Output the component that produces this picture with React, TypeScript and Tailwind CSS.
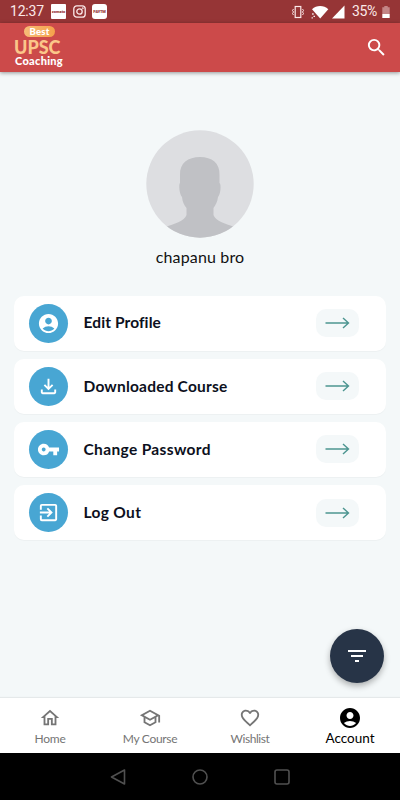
import {
  MdAccountCircle,
  MdExitToApp,
  MdFavoriteBorder,
  MdFilterList,
  MdOutlineFileDownload,
  MdOutlineHome,
  MdOutlineSchool,
  MdSearch,
  MdVpnKey,
} from "react-icons/md";
import type { IconType } from "react-icons";

type MenuRowProps = {
  title: string;
  icon: IconType;
  spacing: string;
};

type TabProps = {
  title: string;
  icon: IconType;
  active?: boolean;
  spacing: string;
};

const menu: MenuRowProps[] = [
  { title: "Edit Profile", icon: MdAccountCircle, spacing: "tracking-[0.1px]" },
  {
    title: "Downloaded Course",
    icon: MdOutlineFileDownload,
    spacing: "tracking-[0.2px]",
  },
  { title: "Change Password", icon: MdVpnKey, spacing: "tracking-[0.35px]" },
  { title: "Log Out", icon: MdExitToApp, spacing: "tracking-[0.35px]" },
];

const tabs: TabProps[] = [
  { title: "Home", icon: MdOutlineHome, spacing: "tracking-[-0.2px]" },
  { title: "My Course", icon: MdOutlineSchool, spacing: "tracking-[-0.3px]" },
  { title: "Wishlist", icon: MdFavoriteBorder, spacing: "tracking-[-0.45px]" },
  {
    title: "Account",
    icon: MdAccountCircle,
    active: true,
    spacing: "tracking-[0px]",
  },
];

const StatusBar = () => (
  <div className="flex h-[23px] shrink-0 items-center bg-[#963536] pl-[10px] pr-[10px] text-[#fbe9e9]">
    <span className="w-[41px] font-['Roboto'] text-[14px] leading-[23px] tracking-[-0.2px]">
      12:37
    </span>
    <span className="flex h-[15px] w-[15px] items-center justify-center overflow-hidden rounded-[1px] bg-white font-['Roboto'] text-[4px] font-black leading-none text-[#963536]">
      zomato
    </span>
    <svg className="ml-[7px]" width="13" height="13" viewBox="0 0 13 13" fill="none" stroke="currentColor" strokeWidth="1.3">
      <rect x="0.8" y="0.8" width="11.4" height="11.4" rx="3" />
      <circle cx="6.5" cy="6.5" r="2.7" />
      <circle cx="9.8" cy="3.2" r="0.3" />
    </svg>
    <span className="ml-[6px] flex h-[15px] w-[15px] items-center justify-center overflow-hidden rounded-[3px] bg-white font-['Roboto'] text-[4px] font-black leading-none tracking-[-0.2px] text-[#963536]">
      PAYTM
    </span>
    <div className="ml-auto flex items-center">
      <svg width="14" height="14" viewBox="0 0 14 14" fill="none" stroke="currentColor">
        <rect x="4.2" y="1.5" width="5.6" height="11" strokeWidth="1.2" />
        <path d="M2.5 4l-1 1.5 1 1.5-1 1.5 1 1.5M11.5 4l1 1.5-1 1.5 1 1.5-1 1.5" strokeWidth="1" />
      </svg>
      <svg className="ml-[6px]" width="18" height="14" viewBox="0 0 18 14" fill="#fff">
        <path d="M1 4.2C5.5 0 12.8 0 17.3 4.2L9.2 13.4z" />
        <path d="M1.2 8.3h1.4v1.4H1.2zM2.5 10.7h1.4v1.4H2.5zM.6 12.2h1.2v1.2H.6z" />
      </svg>
      <svg className="ml-[3px]" width="13" height="14" viewBox="0 0 13 14" fill="#fff">
        <path d="M12.5.5v13H0z" />
      </svg>
      <span className="ml-[7px] w-[26px] whitespace-nowrap font-['Roboto'] text-[14px] leading-[23px] tracking-[-0.4px]">
        35%
      </span>
      <svg className="ml-[4px]" width="8" height="14" viewBox="0 0 8 14">
        <path d="M2.3 1h3.4v1.2h2V9H.3V2.2h2z" fill="#c48586" />
        <path d="M.3 9h7.4v4H.3z" fill="#fff" />
      </svg>
    </div>
  </div>
);

const Header = () => (
  <header className="z-10 flex h-[49px] shrink-0 items-start justify-between bg-[#cc4a4a] pl-[14px] pr-[14px] shadow-[0_1px_4px_rgba(0,0,0,0.4)]">
    <div className="flex flex-col font-['Lato'] font-bold">
      <span className="ml-[10px] mt-[3px] flex h-[11px] w-[31px] items-center justify-center rounded-full bg-gradient-to-r from-[#f6bd77] to-[#f5a14b] text-[9.5px] font-black leading-none tracking-[0.2px] text-white">
        Best
      </span>
      <span className="mt-[2px] h-[16px] whitespace-nowrap text-[18px] font-black leading-[17px] text-[#fbc689]">
        UPSC
      </span>
      <span className="ml-[1px] h-[11px] whitespace-nowrap text-[11px] font-black leading-[11px] tracking-[0.3px] text-white">
        Coaching
      </span>
    </div>
    <MdSearch className="mr-[-2px] mt-[13px] text-white" size={23} />
  </header>
);

const Avatar = () => (
  <svg width="108" height="108" viewBox="0 0 108 108">
    <defs>
      <clipPath id="avatar">
        <circle cx="54" cy="54" r="53.7" />
      </clipPath>
    </defs>
    <g clipPath="url(#avatar)">
      <rect width="108" height="108" fill="#dddee1" />
      <path
        d="M34 45C33.500 33 42 27 54 27S74 33 73.500 45V53C75.500 54 74.500 65 72 67C71.500 72 69.500 75 67.500 78V85C69 91 81 94 88 97L96 108H12L20 97C27 94 39 91 40.500 85V78C38 75 36.500 72 36 67C33.500 65 32.500 54 34 53z"
        fill="#c0c1c5"
      />
    </g>
  </svg>
);

const MenuRow = ({ title, icon: Icon, spacing }: MenuRowProps) => (
  <div className="flex h-[55px] items-center rounded-[10px] bg-white pl-[15px] pr-[27px] shadow-[0_1px_1px_rgba(0,0,0,0.03)]">
    <div className="flex h-[39px] w-[39px] items-center justify-center rounded-full bg-[#48a6d3] text-white">
      <Icon size={23} />
    </div>
    <span
      className={`ml-[15.5px] whitespace-nowrap text-[15.5px] font-bold text-[#0c1020] ${spacing}`}
    >
      {title}
    </span>
    <div className="ml-auto flex h-[28px] w-[43px] items-center justify-center rounded-[10px] bg-[#f4f8f9]">
      <svg width="25" height="12" viewBox="0 0 25 12" fill="none" stroke="#4c9590" strokeWidth="1.4">
        <path d="M.5 6h23M18 1l5.500 5-5.500 5" />
      </svg>
    </div>
  </div>
);

const Tab = ({ title, icon: Icon, active, spacing }: TabProps) => (
  <div
    className={`flex w-[100px] flex-col items-center ${
      active ? "pt-[8px] text-black" : "pt-[9px] text-[#757575]"
    }`}
  >
    <Icon size={active ? 24 : 22} />
    <span
      className={`whitespace-nowrap ${spacing} ${
        active ? "text-[13.5px] leading-[16px]" : "text-[12px] leading-[19px]"
      }`}
    >
      {title}
    </span>
  </div>
);

const App = () => {
  return (
    <div className="relative flex h-[800px] w-[400px] flex-col overflow-hidden bg-[#f4f8f9] font-['Lato',sans-serif]">
      <StatusBar />
      <Header />
      <main className="flex flex-1 flex-col">
        <div className="flex flex-col items-center pt-[57.5px]">
          <Avatar />
          <p className="mt-[8.5px] whitespace-nowrap text-[16px] leading-[22px] tracking-[0.15px] text-[#111]">
            chapanu bro
          </p>
        </div>
        <div className="mt-[27.5px] flex flex-col gap-[8.2px] px-[14px]">
          {menu.map((item) => (
            <MenuRow key={item.title} {...item} />
          ))}
        </div>
      </main>
      <button className="absolute left-[330px] top-[629px] flex h-[54px] w-[54px] items-center justify-center rounded-full bg-[#273447] text-white shadow-[0_3px_6px_rgba(0,0,0,0.3)]">
        <MdFilterList size={24} />
      </button>
      <nav className="flex h-[55px] shrink-0 bg-white shadow-[0_-1px_1px_rgba(0,0,0,0.06)]">
        {tabs.map((tab) => (
          <Tab key={tab.title} {...tab} />
        ))}
      </nav>
      <div className="flex h-[47px] shrink-0 items-center justify-center gap-[66px] bg-black text-[#505050]">
        <svg width="16" height="16" viewBox="0 0 16 16" fill="none" stroke="currentColor" strokeWidth="1.6" strokeLinejoin="round">
          <path d="M14.500 1v14L1.500 8z" />
        </svg>
        <svg width="16" height="16" viewBox="0 0 16 16" fill="none" stroke="currentColor" strokeWidth="1.6">
          <circle cx="8" cy="8" r="7" />
        </svg>
        <svg width="16" height="16" viewBox="0 0 16 16" fill="none" stroke="currentColor" strokeWidth="1.6">
          <rect x="1" y="1" width="14" height="14" rx="2" />
        </svg>
      </div>
    </div>
  );
};

export default App;
